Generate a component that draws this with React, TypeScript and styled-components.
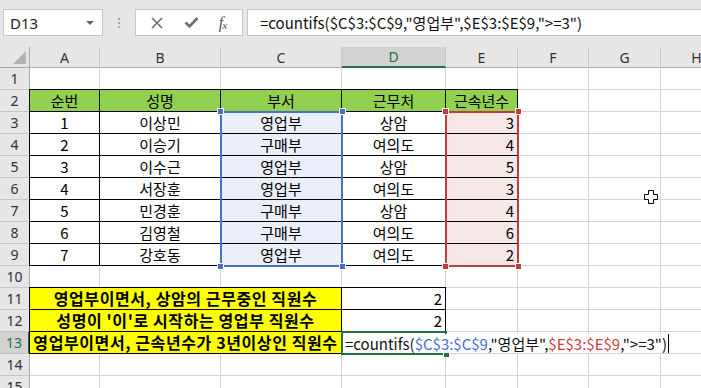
import React from "react";
import styled, { createGlobalStyle } from "styled-components";

const GlobalStyle = createGlobalStyle`
  html, body {
    margin: 0;
    padding: 0;
    background: #ffffff;
    overflow: hidden;
  }
  body {
    font-family: "Noto Sans CJK KR", "Noto Sans", sans-serif;
  }
`;

const KR = `"Noto Sans CJK KR", "Noto Sans", sans-serif`;
const UI = `"Noto Sans", "Noto Sans CJK KR", sans-serif`;

const GREEN = "#217346";
const BLUE = "#4472c4";
const RED = "#c43b3f";

/* ---------- formula bar ---------- */

const TopBar = styled.div`
  height: 47px;
  box-sizing: border-box;
  background: #e6e6e6;
  display: flex;
  align-items: flex-start;
  padding: 9px 0 0 3px;
`;

const NameBox = styled.div`
  width: 100px;
  height: 27px;
  box-sizing: border-box;
  background: #fff;
  border: 1px solid #c6c6c6;
  display: flex;
  align-items: center;
  justify-content: space-between;
  padding: 0 8px 0 6px;
  font-family: ${UI};
  font-size: 15px;
  color: #222;
`;

const DropArrow = styled.span`
  width: 0;
  height: 0;
  border-left: 4px solid transparent;
  border-right: 4px solid transparent;
  border-top: 4px solid #666;
`;

const Grip = styled.div`
  width: 32px;
  height: 27px;
  display: flex;
  flex-direction: column;
  align-items: center;
  justify-content: center;
  gap: 2px;

  span {
    width: 2px;
    height: 2px;
    background: #a8a8a8;
  }
`;

const ButtonBox = styled.div`
  width: 108px;
  height: 27px;
  box-sizing: border-box;
  background: #fff;
  border: 1px solid #c6c6c6;
  display: flex;
  align-items: center;
  justify-content: space-around;
  padding: 0 6px 0 4px;
`;

const Fx = styled.span`
  font-family: "Liberation Serif", serif;
  font-style: italic;
  font-size: 16px;
  color: #555;
  letter-spacing: -1px;

  sub {
    font-size: 11px;
    vertical-align: -1px;
  }
`;

const FormulaInput = styled.div`
  flex: 1;
  height: 27px;
  margin-left: 4px;
  box-sizing: border-box;
  background: #fff;
  border: 1px solid #c6c6c6;
  border-right: none;
  display: flex;
  align-items: center;
  padding-left: 12px;
  font-family: ${KR};
  font-size: 15px;
  color: #111;
  white-space: nowrap;
`;

/* ---------- sheet ---------- */

const Sheet = styled.div`
  display: grid;
  grid-template-columns: 30px 70px 121px 121px 104px 72px 71px 72px 72px;
  grid-template-rows: 21px repeat(15, 22px);
`;

const Corner = styled.div`
  grid-row: 1;
  grid-column: 1;
  position: relative;
  background: #e6e6e6;
  border-right: 1px solid #ababab;
  border-bottom: 1px solid #ababab;

  &::after {
    content: "";
    position: absolute;
    right: 3px;
    bottom: 3px;
    width: 13px;
    height: 13px;
    background: #b4b4b4;
    clip-path: polygon(100% 0, 100% 100%, 0 100%);
  }
`;

const ColHead = styled.div<{ $c: number; $sel?: boolean }>`
  grid-row: 1;
  grid-column: ${(p) => p.$c};
  background: ${(p) => (p.$sel ? "#d2d2d2" : "#e6e6e6")};
  border-right: 1px solid #c6c6c6;
  border-bottom: ${(p) => (p.$sel ? `2px solid ${GREEN}` : "1px solid #ababab")};
  display: flex;
  align-items: center;
  justify-content: center;
  font-family: ${UI};
  font-size: 14px;
  color: ${(p) => (p.$sel ? GREEN : "#333")};
`;

const RowHead = styled.div<{ $r: number; $sel?: boolean }>`
  grid-row: ${(p) => p.$r};
  grid-column: 1;
  background: ${(p) => (p.$sel ? "#d2d2d2" : "#e6e6e6")};
  border-right: ${(p) => (p.$sel ? `2px solid ${GREEN}` : "1px solid #ababab")};
  border-bottom: 1px solid #c6c6c6;
  display: flex;
  align-items: center;
  justify-content: center;
  font-family: ${UI};
  font-size: 14px;
  color: ${(p) => (p.$sel ? GREEN : "#333")};
`;

type Align = "left" | "center" | "right";

const Cell = styled.div<{
  $r: number;
  $c: number;
  $span?: number;
  $bg?: string;
  $boxed?: boolean;
  $bold?: boolean;
  $align?: Align;
}>`
  grid-row: ${(p) => p.$r};
  grid-column: ${(p) => p.$c} / span ${(p) => p.$span || 1};
  position: relative;
  background: ${(p) => p.$bg || "#fff"};
  border-right: 1px solid #d4d4d4;
  border-bottom: 1px solid #d4d4d4;
  display: flex;
  align-items: center;
  justify-content: ${(p) =>
    p.$align === "right" ? "flex-end" : p.$align === "left" ? "flex-start" : "center"};
  padding: 0 3px;
  font-family: ${KR};
  font-size: ${(p) => (p.$bold ? "16px" : "15px")};
  font-weight: ${(p) => (p.$bold ? 700 : 400)};
  letter-spacing: ${(p) => (p.$bold ? "0.6px" : "0")};
  color: #000;
  white-space: nowrap;
  line-height: 21px;

  ${(p) =>
    p.$boxed &&
    `
    &::after {
      content: "";
      position: absolute;
      top: -1px;
      left: -1px;
      right: -1px;
      bottom: -1px;
      border: 1px solid #000;
      z-index: 1;
      pointer-events: none;
    }
  `}
`;

const Range = styled.div<{ $c: number; $r: number; $span: number; $color: string }>`
  grid-column: ${(p) => p.$c};
  grid-row: ${(p) => p.$r} / span ${(p) => p.$span};
  margin: -1px;
  position: relative;
  border: 2px solid ${(p) => p.$color};
  z-index: 2;
  pointer-events: none;
`;

const Handle = styled.span<{ $color: string; $x: "l" | "r"; $y: "t" | "b" }>`
  position: absolute;
  width: 5px;
  height: 5px;
  background: ${(p) => p.$color};
  outline: 1px solid #fff;
  ${(p) => (p.$x === "l" ? "left: -4px;" : "right: -4px;")}
  ${(p) => (p.$y === "t" ? "top: -4px;" : "bottom: -4px;")}
`;

const EditCell = styled.div<{ $r: number; $c: number }>`
  grid-row: ${(p) => p.$r};
  grid-column: ${(p) => p.$c};
  margin: -1px;
  position: relative;
  z-index: 3;
  border: 2px solid ${GREEN};
  display: flex;
  align-items: center;
  padding-left: 2px;
  background: #fff;

  &::after {
    content: "";
    position: absolute;
    right: -4px;
    bottom: -4px;
    width: 5px;
    height: 5px;
    background: ${GREEN};
    outline: 1px solid #fff;
  }
`;

const EditText = styled.span`
  display: inline-flex;
  align-items: center;
  height: 19px;
  padding-right: 2px;
  background: #fff;
  font-family: ${KR};
  font-size: 15px;
  color: #111;
  white-space: nowrap;
  position: relative;
  z-index: 4;
`;

const Caret = styled.span`
  display: inline-block;
  width: 1px;
  height: 19px;
  margin-left: 1px;
  background: #000;
`;

const Ref = styled.span<{ $color: string }>`
  color: ${(p) => p.$color};
`;

const Pointer = styled.svg`
  position: absolute;
  left: 644px;
  top: 190px;
  z-index: 10;
`;

/* ---------- data ---------- */

const COLS = ["A", "B", "C", "D", "E", "F", "G", "H"];

const HEAD = ["순번", "성명", "부서", "근무처", "근속년수"];

const PEOPLE: [number, string, string, string, number][] = [
  [1, "이상민", "영업부", "상암", 3],
  [2, "이승기", "구매부", "여의도", 4],
  [3, "이수근", "영업부", "상암", 5],
  [4, "서장훈", "영업부", "여의도", 3],
  [5, "민경훈", "구매부", "상암", 4],
  [6, "김영철", "구매부", "여의도", 6],
  [7, "강호동", "영업부", "여의도", 2],
];

const SUMMARY = [
  "영업부이면서, 상암의 근무중인 직원수",
  "성명이 '이'로 시작하는 영업부 직원수",
  "영업부이면서, 근속년수가 3년이상인 직원수",
];

const SELECTED_ROW = 13;

const Formula: React.FC<{ colored?: boolean }> = ({ colored }) => (
  <>
    =countifs(
    <Ref $color={colored ? "#3d6fd6" : "inherit"}>$C$3:$C$9</Ref>
    ,"영업부",
    <Ref $color={colored ? "#d13c40" : "inherit"}>$E$3:$E$9</Ref>
    ,"&gt;=3")
  </>
);

const App: React.FC = () => {
  const cells: React.ReactNode[] = [];

  for (let row = 1; row <= 15; row++) {
    const r = row + 1;
    cells.push(
      <RowHead key={`h${row}`} $r={r} $sel={row === SELECTED_ROW}>
        {row}
      </RowHead>
    );

    if (row === 2) {
      HEAD.forEach((t, i) => (
        cells.push(
          <Cell key={`c${row}-${i}`} $r={r} $c={i + 2} $bg="#92d050" $boxed>
            {t}
          </Cell>
        )
      ));
      for (let c = 7; c <= 9; c++) cells.push(<Cell key={`c${row}-${c}`} $r={r} $c={c} />);
      continue;
    }

    if (row >= 3 && row <= 9) {
      const [no, name, dept, place, years] = PEOPLE[row - 3];
      cells.push(
        <Cell key={`c${row}-a`} $r={r} $c={2} $boxed>{no}</Cell>,
        <Cell key={`c${row}-b`} $r={r} $c={3} $boxed>{name}</Cell>,
        <Cell key={`c${row}-c`} $r={r} $c={4} $bg="#e9eef8" $boxed>{dept}</Cell>,
        <Cell key={`c${row}-d`} $r={r} $c={5} $boxed>{place}</Cell>,
        <Cell key={`c${row}-e`} $r={r} $c={6} $bg="#f8e7e7" $boxed $align="right">{years}</Cell>
      );
      for (let c = 7; c <= 9; c++) cells.push(<Cell key={`c${row}-${c}`} $r={r} $c={c} />);
      continue;
    }

    if (row >= 11 && row <= 13) {
      cells.push(
        <Cell key={`c${row}-l`} $r={r} $c={2} $span={3} $bg="#ffff00" $boxed $bold>
          {SUMMARY[row - 11]}
        </Cell>
      );
      if (row === 13) {
        cells.push(
          <EditCell key={`c${row}-d`} $r={r} $c={5}>
            <EditText>
              <Formula colored />
              <Caret />
            </EditText>
          </EditCell>
        );
      } else {
        cells.push(
          <Cell key={`c${row}-d`} $r={r} $c={5} $boxed $align="right">2</Cell>
        );
      }
      for (let c = 6; c <= 9; c++) cells.push(<Cell key={`c${row}-${c}`} $r={r} $c={c} />);
      continue;
    }

    for (let c = 2; c <= 9; c++) cells.push(<Cell key={`c${row}-${c}`} $r={r} $c={c} />);
  }

  return (
    <>
      <GlobalStyle />
      <TopBar>
        <NameBox>
          D13
          <DropArrow />
        </NameBox>
        <Grip>
          <span />
          <span />
          <span />
        </Grip>
        <ButtonBox>
          <svg width="14" height="14" viewBox="0 0 14 14">
            <path d="M2 2 L12 12 M12 2 L2 12" stroke="#6d6d6d" strokeWidth="1.6" fill="none" />
          </svg>
          <svg width="15" height="13" viewBox="0 0 15 13">
            <path d="M1.5 6.5 L5.5 10.5 L13.5 2" stroke="#6d6d6d" strokeWidth="2.6" fill="none" />
          </svg>
          <Fx>
            f<sub>x</sub>
          </Fx>
        </ButtonBox>
        <FormulaInput>
          <Formula />
        </FormulaInput>
      </TopBar>

      <Sheet>
        <Corner />
        {COLS.map((c, i) => (
          <ColHead key={c} $c={i + 2} $sel={c === "D"}>
            {c}
          </ColHead>
        ))}
        {cells}

        <Range $c={4} $r={4} $span={7} $color={BLUE}>
          <Handle $color={BLUE} $x="l" $y="t" />
          <Handle $color={BLUE} $x="r" $y="t" />
          <Handle $color={BLUE} $x="l" $y="b" />
          <Handle $color={BLUE} $x="r" $y="b" />
        </Range>
        <Range $c={6} $r={4} $span={7} $color={RED}>
          <Handle $color={RED} $x="l" $y="t" />
          <Handle $color={RED} $x="r" $y="t" />
          <Handle $color={RED} $x="l" $y="b" />
          <Handle $color={RED} $x="r" $y="b" />
        </Range>
      </Sheet>

      <Pointer width="14" height="14" viewBox="0 0 14 14">
        <path
          d="M4.5 0.5 H9.5 V4.5 H13.5 V9.5 H9.5 V13.5 H4.5 V9.5 H0.5 V4.5 H4.5 Z"
          fill="#fff"
          stroke="#000"
          strokeWidth="1"
        />
      </Pointer>
    </>
  );
};

export default App;
